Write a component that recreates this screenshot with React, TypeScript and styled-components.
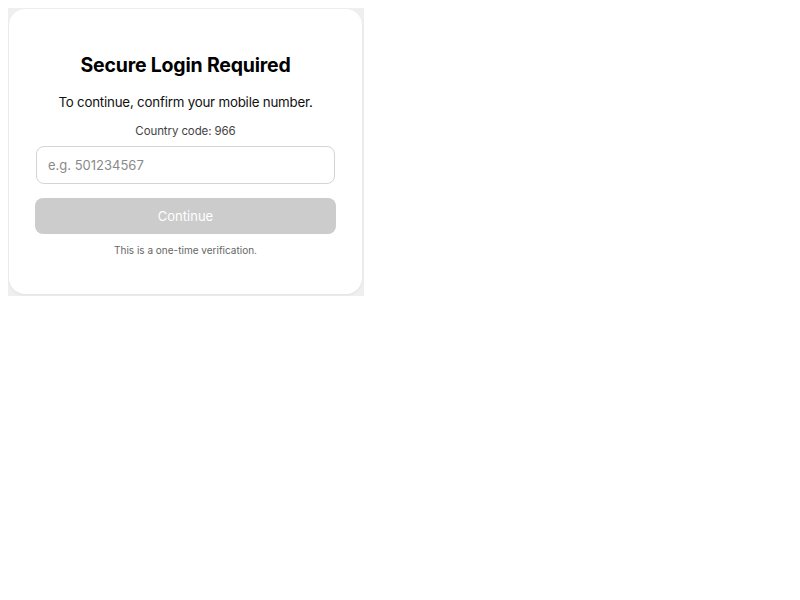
import React from "react";
import styled, { createGlobalStyle } from "styled-components";

const GlobalStyle = createGlobalStyle`
  body {
    margin: 8px;
    background: #ffffff;
    font-family: Inter, "Noto Sans", "Liberation Sans", sans-serif;
  }
  * {
    box-sizing: border-box;
  }
`;

const Frame = styled.div`
  display: inline-block;
  background: #efefef;
  padding: 1px 2px 2px 1px;
`;

const Card = styled.div`
  width: 353px;
  height: 285px;
  background: #ffffff;
  border-radius: 16px;
  box-shadow: 0 1px 3px rgba(0, 0, 0, 0.06);
  padding: 44px 26px 36px;
  display: flex;
  flex-direction: column;
  align-items: stretch;
  text-align: center;
`;

const Title = styled.h1`
  margin: 0;
  font-size: 19.5px;
  line-height: 24px;
  font-weight: 700;
  letter-spacing: -0.2px;
  color: #000000;
`;

const Subtitle = styled.p`
  margin: 15px 0 0;
  font-size: 13.3px;
  line-height: 20px;
  letter-spacing: -0.2px;
  color: #111111;
`;

const CountryCode = styled.div`
  margin-top: 10px;
  font-size: 11.5px;
  line-height: 18px;
  letter-spacing: -0.1px;
  color: #444444;
`;

const PhoneInput = styled.input`
  margin: 6px 1px 0;
  height: 38px;
  border: 1px solid #d4d4d4;
  border-radius: 8px;
  padding: 0 11px;
  font-family: inherit;
  font-size: 13px;
  color: #222222;
  outline: none;

  &::placeholder {
    color: #8a8a8a;
  }
`;

const ContinueButton = styled.button`
  margin-top: 14px;
  height: 36px;
  border: none;
  border-radius: 8px;
  background: #cccccc;
  color: #ffffff;
  font-family: inherit;
  font-size: 13px;
  cursor: not-allowed;
`;

const Note = styled.p`
  margin: 8px 0 0;
  font-size: 10px;
  line-height: 16px;
  color: #666666;
`;

export default function App() {
  return (
    <>
      <GlobalStyle />
      <Frame>
        <Card>
          <Title>Secure Login Required</Title>
          <Subtitle>To continue, confirm your mobile number.</Subtitle>
          <CountryCode>Country code: 966</CountryCode>
          <PhoneInput type="tel" placeholder="e.g. 501234567" />
          <ContinueButton disabled>Continue</ContinueButton>
          <Note>This is a one-time verification.</Note>
        </Card>
      </Frame>
    </>
  );
}
